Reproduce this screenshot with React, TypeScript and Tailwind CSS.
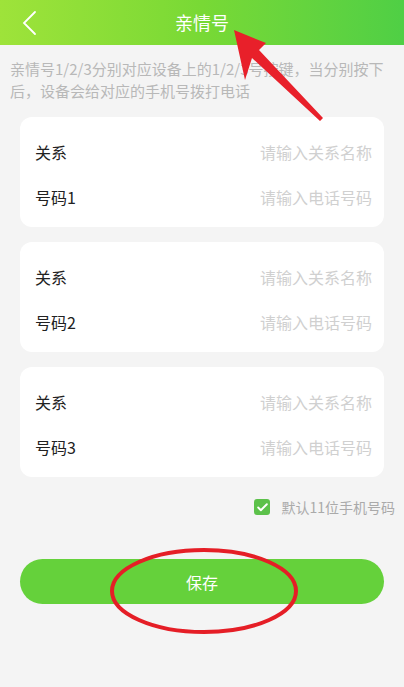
import { Check } from "lucide-react";

const font = { fontFamily: '"Noto Sans CJK SC", "Noto Sans", sans-serif' };

function Card({ n }: { n: number }) {
  return (
    <div className="mx-[20px] bg-white rounded-[12px] pl-[15px] pr-[12px] pt-[12px] pb-[8px] flex flex-col">
      <div className="h-[45px] flex items-center justify-between">
        <span className="text-[16px] text-[#222]">关系</span>
        <span className="text-[16px] text-[#d0d0d0]">请输入关系名称</span>
      </div>
      <div className="h-[45px] flex items-center justify-between">
        <span className="text-[16px] text-[#222]">号码{n}</span>
        <span className="text-[16px] text-[#d0d0d0]">请输入电话号码</span>
      </div>
    </div>
  );
}

export default function App() {
  return (
    <div className="relative w-[404px] h-[687px] bg-[#f4f4f4] overflow-hidden" style={font}>
      {/* Header */}
      <header className="h-[45px] bg-gradient-to-r from-[#9ee33a] via-[#78d935] to-[#4fcf45] flex items-center relative">
        <svg className="absolute left-[20px] top-[10px]" width="18" height="26" viewBox="0 0 18 26">
          <path d="M15 2 L4 13 L15 24" fill="none" stroke="#fff" strokeWidth="1.8" strokeLinecap="round" />
        </svg>
        <h1 className="w-full text-center text-white text-[18px]">亲情号</h1>
      </header>

      {/* Description */}
      <p className="px-[10px] pt-[13px] text-[15px] leading-[22px] text-[#b8b8b8]">
        亲情号1/2/3分别对应设备上的1/2/3号按键，当分别按下后，设备会给对应的手机号拨打电话
      </p>

      <div className="mt-[15px] flex flex-col gap-[15px]">
        <Card n={1} />
        <Card n={2} />
        <Card n={3} />
      </div>

      {/* Default checkbox */}
      <div className="mt-[20px] pr-[9px] h-[20px] flex items-center justify-end gap-[11px]">
        <span className="w-[16px] h-[16px] rounded-[3px] bg-[#5cc14a] flex items-center justify-center">
          <Check className="w-[13px] h-[13px] text-white" strokeWidth={3.5} />
        </span>
        <span className="text-[14px] leading-[20px] text-[#aaaaaa]">默认11位手机号码</span>
      </div>

      {/* Save */}
      <div className="mt-[42px] px-[20px]">
        <button className="w-full h-[45px] rounded-full bg-[#65d13b] text-white text-[16px]">保存</button>
      </div>

      {/* Annotation overlays */}
      <svg className="absolute inset-0 pointer-events-none" width="404" height="687" viewBox="0 0 404 687">
        <path
          d="M234 30 L266 43 L259 50 L323 118 L320 121 L252 58 L245 80 Z"
          fill="#e8202a"
        />
        <ellipse cx="204" cy="591" rx="92" ry="41" fill="none" stroke="#e51e26" strokeWidth="4" />
      </svg>
    </div>
  );
}
